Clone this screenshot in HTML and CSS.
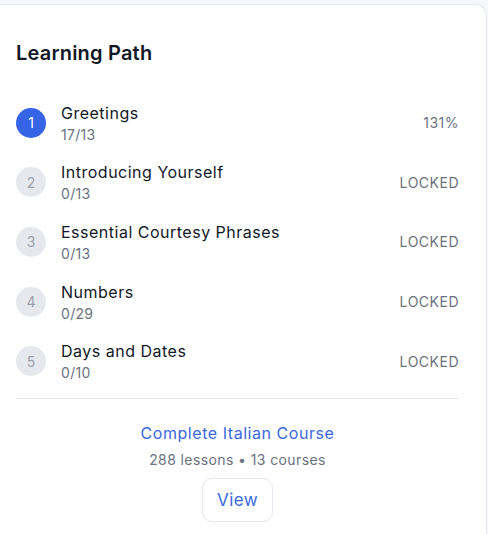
FILE: index.html
```html
<!DOCTYPE html>
<html lang="en">
<head>
<meta charset="utf-8">
<title>Learning Path</title>
<link rel="stylesheet" href="styles.css">
</head>
<body>
<div class="card">
  <h2 class="card-title">Learning Path</h2>
  <ul class="path">
    <li class="step">
      <span class="num active">1</span>
      <div class="info">
        <div class="name">Greetings</div>
        <div class="count">17/13</div>
      </div>
      <span class="status">131%</span>
    </li>
    <li class="step">
      <span class="num">2</span>
      <div class="info">
        <div class="name">Introducing Yourself</div>
        <div class="count">0/13</div>
      </div>
      <span class="status locked">LOCKED</span>
    </li>
    <li class="step">
      <span class="num">3</span>
      <div class="info">
        <div class="name">Essential Courtesy Phrases</div>
        <div class="count">0/13</div>
      </div>
      <span class="status locked">LOCKED</span>
    </li>
    <li class="step">
      <span class="num">4</span>
      <div class="info">
        <div class="name">Numbers</div>
        <div class="count">0/29</div>
      </div>
      <span class="status locked">LOCKED</span>
    </li>
    <li class="step">
      <span class="num">5</span>
      <div class="info">
        <div class="name">Days and Dates</div>
        <div class="count">0/10</div>
      </div>
      <span class="status locked">LOCKED</span>
    </li>
  </ul>
  <div class="footer">
    <a class="course-link" href="#">Complete Italian Course</a>
    <div class="meta">288 lessons • 13 courses</div>
    <button class="view-btn" type="button">View</button>
  </div>
</div>
</body>
</html>
```

FILE: styles.css
```css
* { box-sizing: border-box; }

html, body {
  margin: 0;
  padding: 0;
}

body {
  background: #f6f7fa;
  font-family: Inter, "Noto Sans", "Liberation Sans", sans-serif;
  color: #111827;
  padding-top: 4px;
  height: 534px;
  overflow: hidden;
}

.card {
  background: #ffffff;
  border: 1px solid #e6e8ef;
  border-left: none;
  border-bottom: none;
  border-top-right-radius: 12px;
  width: 487px;
  min-height: 540px;
  padding: 33.5px 27px 0 16px;
}

.card-title {
  margin: 0;
  font-size: 20px;
  line-height: 28px;
  font-weight: 600;
  color: #111827;
  letter-spacing: 0.2px;
}

.path {
  list-style: none;
  margin: 34px 0 0;
  padding: 0;
  display: flex;
  flex-direction: column;
  gap: 15.7px;
}

.step {
  display: flex;
  align-items: center;
  gap: 15px;
  height: 44px;
}

.num {
  flex: none;
  width: 30px;
  height: 30px;
  border-radius: 50%;
  background: #e7e8ed;
  color: #9ca0ab;
  font-size: 14px;
  display: flex;
  align-items: center;
  justify-content: center;
}

.num.active {
  background: #3564e6;
  color: #ffffff;
}

.info {
  flex: 1;
  min-width: 0;
}

.name {
  font-size: 16px;
  line-height: 24px;
  font-weight: 400;
  color: #111827;
  letter-spacing: 0.5px;
}

.count {
  font-size: 14px;
  line-height: 20px;
  color: #6b7280;
  letter-spacing: 0.3px;
}

.status {
  flex: none;
  font-size: 14px;
  color: #6b7280;
  letter-spacing: 0.5px;
}

.footer {
  margin-top: 14.5px;
  border-top: 1px solid #e5e8f0;
  padding-top: 22px;
  display: flex;
  flex-direction: column;
  align-items: center;
}

.course-link {
  font-size: 16px;
  line-height: 24px;
  font-weight: 400;
  color: #3a69e2;
  text-decoration: none;
  letter-spacing: 0.55px;
}

.meta {
  margin-top: 5.5px;
  font-size: 14px;
  line-height: 20px;
  color: #6b7280;
  letter-spacing: 0.4px;
}

.view-btn {
  margin-top: 8px;
  width: 71px;
  height: 44px;
  border: 1px solid #e3e7ef;
  border-radius: 10px;
  background: #ffffff;
  color: #3a69e2;
  font-family: inherit;
  font-size: 17px;
  font-weight: 400;
  letter-spacing: 0.4px;
  cursor: pointer;
}
```
